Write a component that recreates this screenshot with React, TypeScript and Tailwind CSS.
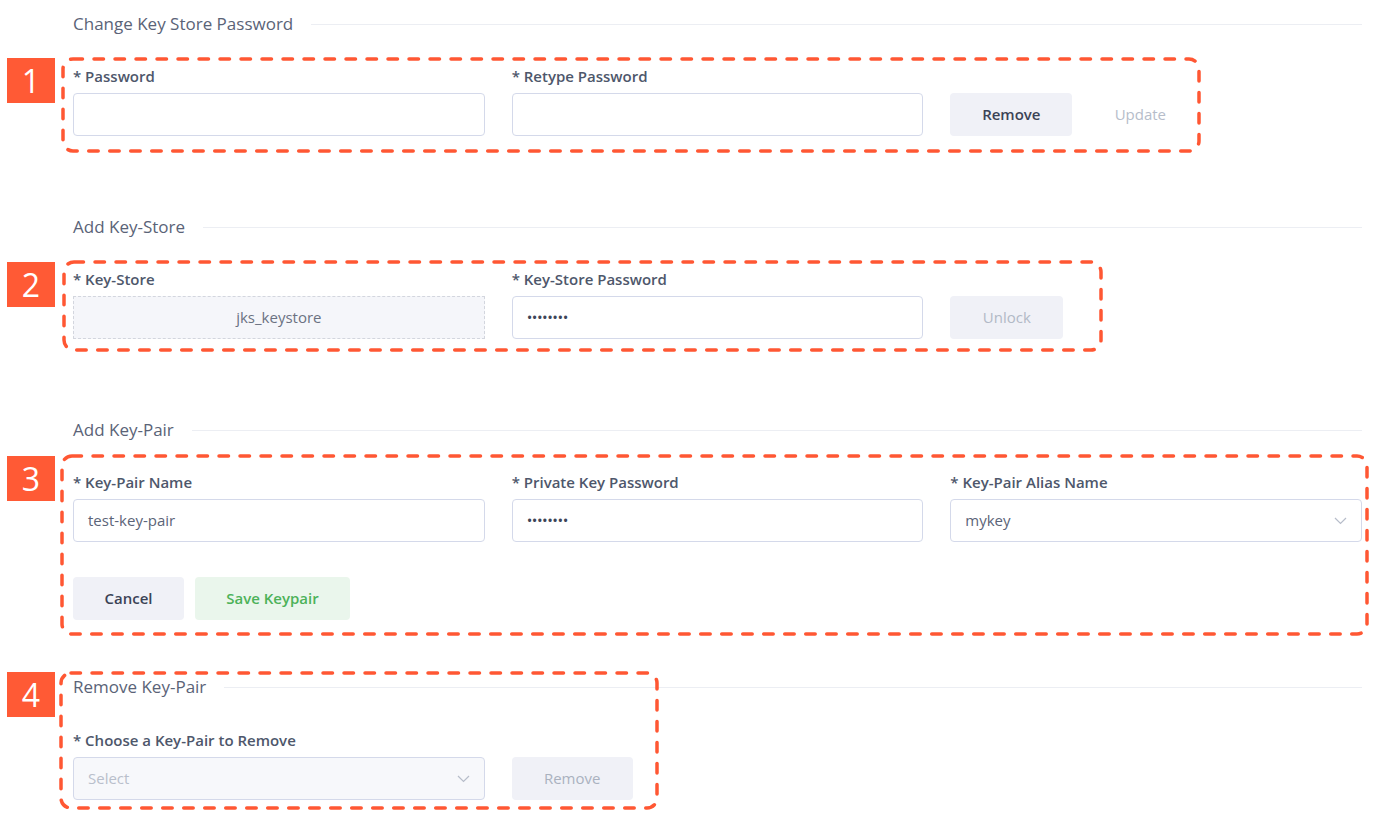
import { ReactNode } from "react";

function SectionTitle({ children }: { children: ReactNode }) {
  return (
    <div className="flex items-center gap-[18px] h-6">
      <span className="text-[17px] leading-6 text-[#5a6377] whitespace-nowrap">{children}</span>
      <div className="flex-1 h-px bg-[#eceef3]" />
    </div>
  );
}

function Field({ label, children }: { label?: string; children: ReactNode }) {
  return (
    <div className="flex flex-col">
      <div className="h-5 leading-5 text-[15px] font-semibold text-[#4e576b] whitespace-nowrap">
        {label ? `* ${label}` : ""}
      </div>
      <div className="mt-[7px] h-[43px] flex">{children}</div>
    </div>
  );
}

function TextBox({ value, dots }: { value?: string; dots?: boolean }) {
  return (
    <div className="flex-1 h-full rounded border border-[#d4d9ea] bg-white flex items-center px-[14px]">
      {dots ? (
        <span className="text-[15px] tracking-[-0.5px] text-[#3d4558]">••••••••</span>
      ) : (
        <span className="text-[15px] text-[#5b6478]">{value}</span>
      )}
    </div>
  );
}

function Chevron() {
  return (
    <svg width="13" height="8" viewBox="0 0 13 8" fill="none">
      <polyline points="1,1 6.5,6.5 12,1" stroke="#b7bdca" strokeWidth="1.2" />
    </svg>
  );
}

function Dashed({ className, w, h }: { className: string; w: number; h: number }) {
  return (
    <svg className={`absolute pointer-events-none ${className}`} width={w} height={h}>
      <rect
        x="2"
        y="2"
        width={w - 4}
        height={h - 4}
        rx="10"
        fill="none"
        stroke="#ff5733"
        strokeWidth="3.5"
        strokeDasharray="9.5 11.5"
        strokeLinecap="round"
      />
    </svg>
  );
}

function Badge({ className, n }: { className: string; n: string }) {
  return (
    <div
      className={`absolute w-[48px] h-[45px] bg-[#ff5a35] text-white text-[32px] leading-none flex items-center justify-center font-['Open_Sans',sans-serif] ${className}`}
    >
      {n}
    </div>
  );
}

export default function App() {
  return (
    <div className="relative w-[1380px] h-[830px] overflow-hidden bg-white font-['Open_Sans',sans-serif]">
      <div className="pl-[73px] pr-[18px] pt-3 flex flex-col">
        {/* change password */}
        <SectionTitle>Change Key Store Password</SectionTitle>
        <div className="mt-[30px] grid grid-cols-3 gap-x-[27px]">
          <Field label="Password">
            <TextBox />
          </Field>
          <Field label="Retype Password">
            <TextBox />
          </Field>
          <Field>
            <div className="flex gap-5">
              <button className="w-[122px] h-full rounded bg-[#f0f1f7] text-[15px] font-semibold text-[#3b4356]">
                Remove
              </button>
              <button className="w-[96px] h-full text-[15px] text-[#b6bdca]">Update</button>
            </div>
          </Field>
        </div>

        {/* add key store */}
        <div className="mt-[79px]">
          <SectionTitle>Add Key-Store</SectionTitle>
        </div>
        <div className="mt-[30px] grid grid-cols-3 gap-x-[27px]">
          <Field label="Key-Store">
            <div className="flex-1 h-full border border-dashed border-[#d3d6de] bg-[#f5f6fa] flex items-center justify-center text-[15px] text-[#6b7282]">
              jks_keystore
            </div>
          </Field>
          <Field label="Key-Store Password">
            <TextBox dots />
          </Field>
          <Field>
            <button className="w-[113px] h-full rounded bg-[#f0f1f7] text-[15px] font-medium text-[#b2b9c6]">
              Unlock
            </button>
          </Field>
        </div>

        {/* add key pair */}
        <div className="mt-[79px]">
          <SectionTitle>Add Key-Pair</SectionTitle>
        </div>
        <div className="mt-[30px] grid grid-cols-3 gap-x-[27px]">
          <Field label="Key-Pair Name">
            <TextBox value="test-key-pair" />
          </Field>
          <Field label="Private Key Password">
            <TextBox dots />
          </Field>
          <Field label="Key-Pair Alias Name">
            <div className="flex-1 h-full rounded border border-[#d4d9ea] bg-white flex items-center justify-between pl-[14px] pr-[14px]">
              <span className="text-[15px] text-[#5b6478]">mykey</span>
              <Chevron />
            </div>
          </Field>
        </div>
        <div className="mt-[35px] flex gap-[11px]">
          <button className="w-[111px] h-[43px] rounded bg-[#f0f1f7] text-[15px] font-semibold text-[#3b4356]">
            Cancel
          </button>
          <button className="w-[155px] h-[43px] rounded bg-[#eaf6ec] text-[15px] font-semibold text-[#4cb259]">
            Save Keypair
          </button>
        </div>

        {/* remove key pair */}
        <div className="mt-[55px]">
          <SectionTitle>Remove Key-Pair</SectionTitle>
        </div>
        <div className="mt-[31px] grid grid-cols-3 gap-x-[27px]">
          <Field label="Choose a Key-Pair to Remove">
            <div className="flex-1 h-full rounded border border-[#d4d9ea] bg-[#f7f8fb] flex items-center justify-between pl-[14px] pr-[14px]">
              <span className="text-[15px] text-[#b9bfcb]">Select</span>
              <Chevron />
            </div>
          </Field>
          <Field>
            <button className="w-[121px] h-full rounded bg-[#f0f1f7] text-[15px] font-medium text-[#aab1bf]">
              Remove
            </button>
          </Field>
        </div>
      </div>

      {/* annotation overlays */}
      <Dashed className="left-[61px] top-[57px]" w={1140} h={96} />
      <Dashed className="left-[62px] top-[260px]" w={1041} h={92} />
      <Dashed className="left-[60px] top-[454px]" w={1309} h={182} />
      <Dashed className="left-[59px] top-[671px]" w={600} h={139} />
      <Badge className="left-[7px] top-[58px]" n="1" />
      <Badge className="left-[7px] top-[262px]" n="2" />
      <Badge className="left-[7px] top-[456px]" n="3" />
      <Badge className="left-[7px] top-[672px]" n="4" />
    </div>
  );
}
